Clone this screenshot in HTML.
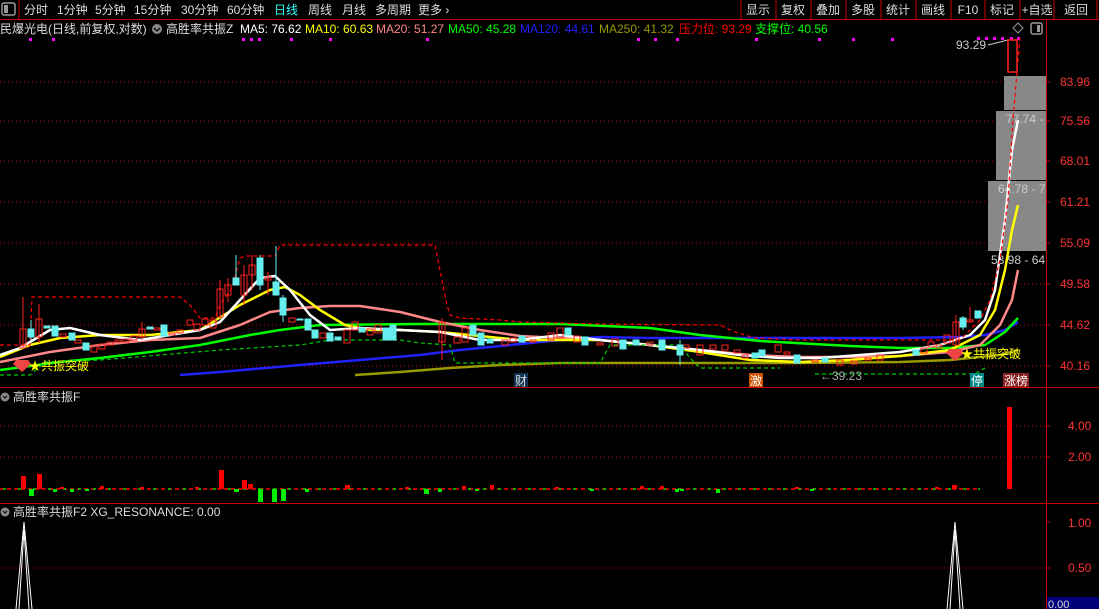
<!DOCTYPE html>
<html><head><meta charset="utf-8">
<style>
html,body{margin:0;padding:0;background:#000;width:1099px;height:609px;overflow:hidden;font-family:"Liberation Sans","Noto Sans CJK SC",sans-serif;}
svg{display:block}
text{font-family:"Liberation Sans","Noto Sans CJK SC",sans-serif;}
</style></head><body>
<svg width="1099" height="609" viewBox="0 0 1099 609" xmlns="http://www.w3.org/2000/svg">
<rect width="1099" height="609" fill="#000"/>
<rect x="2" y="3" width="13" height="12" fill="none" stroke="#999" stroke-width="1.5" rx="2"/>
<rect x="4" y="5" width="4" height="8" fill="#999"/>
<line x1="19" y1="0" x2="19" y2="19" stroke="#c00"/>
<g font-size="12" fill="#ddd">
<text x="24" y="14">分时</text><text x="57" y="14">1分钟</text><text x="95" y="14">5分钟</text>
<text x="134" y="14">15分钟</text><text x="181" y="14">30分钟</text><text x="227" y="14">60分钟</text>
<text x="274" y="14" fill="#3ff">日线</text><text x="308" y="14">周线</text><text x="342" y="14">月线</text>
<text x="375" y="14">多周期</text><text x="418" y="14">更多 ›</text>
</g>
<g stroke="#c00" fill="none">
<line x1="741" y1="0" x2="741" y2="19"/><line x1="776" y1="0" x2="776" y2="19"/><line x1="811" y1="0" x2="811" y2="19"/>
<line x1="846" y1="0" x2="846" y2="19"/><line x1="881" y1="0" x2="881" y2="19"/><line x1="916" y1="0" x2="916" y2="19"/>
<line x1="951" y1="0" x2="951" y2="19"/><line x1="985" y1="0" x2="985" y2="19"/><line x1="1020" y1="0" x2="1020" y2="19"/>
<line x1="1054" y1="0" x2="1054" y2="19"/><line x1="1097" y1="0" x2="1097" y2="19"/>
</g>
<g font-size="12" fill="#ddd" text-anchor="middle">
<text x="758" y="14">显示</text><text x="793" y="14">复权</text><text x="828" y="14">叠加</text><text x="863" y="14">多股</text>
<text x="898" y="14">统计</text><text x="933" y="14">画线</text><text x="968" y="14">F10</text><text x="1002" y="14">标记</text>
<text x="1037" y="14">+自选</text><text x="1076" y="14">返回</text>
</g>
<line x1="0" y1="19.5" x2="1099" y2="19.5" stroke="#c00"/>
<g font-size="12">
<text x="0" y="33" fill="#ddd">民爆光电(日线,前复权,对数)</text>
<circle cx="157" cy="29" r="5" fill="#888"/><path d="M154 28l3 3 3-3" stroke="#000" fill="none" stroke-width="1.3"/>
<text x="166" y="33" fill="#ddd">高胜率共振Z</text>
<text x="240" y="33" fill="#fff">MA5: 76.62</text>
<text x="305" y="33" fill="#ff0">MA10: 60.63</text>
<text x="376" y="33" fill="#f88">MA20: 51.27</text>
<text x="448" y="33" fill="#0f0">MA50: 45.28</text>
<text x="520" y="33" fill="#22f">MA120: 44.61</text>
<text x="599" y="33" fill="#990">MA250: 41.32</text>
<text x="679" y="33" fill="#f00">压力位: 93.29</text>
<text x="755" y="33" fill="#0f0">支撑位: 40.56</text>
</g>
<path d="M1018 23l5 5-5 5-5-5z" stroke="#999" fill="none"/>
<rect x="1031" y="23" width="11" height="11" fill="none" stroke="#999" stroke-width="1.5" rx="2"/><rect x="1037" y="25" width="3" height="7" fill="#999"/>
<g fill="#f0f">
<rect x="29" y="38" width="3" height="3"/><rect x="52" y="38" width="3" height="3"/><rect x="242" y="38" width="3" height="3"/><rect x="250" y="38" width="3" height="3"/><rect x="258" y="38" width="3" height="3"/><rect x="290" y="38" width="3" height="3"/><rect x="329" y="38" width="3" height="3"/><rect x="426" y="38" width="3" height="3"/><rect x="637" y="38" width="3" height="3"/><rect x="654" y="38" width="3" height="3"/><rect x="676" y="38" width="3" height="3"/><rect x="755" y="38" width="3" height="3"/><rect x="818" y="38" width="3" height="3"/><rect x="852" y="38" width="3" height="3"/><rect x="891" y="38" width="3" height="3"/><rect x="977" y="37" width="3" height="3"/><rect x="985" y="37" width="3" height="3"/><rect x="993" y="37" width="3" height="3"/><rect x="1001" y="37" width="3" height="3"/><rect x="1010" y="37" width="3" height="3"/><rect x="1017" y="37" width="3" height="3"/>
</g>
<line x1="1046.5" y1="20" x2="1046.5" y2="609" stroke="#c00"/>
<g stroke="#c00" stroke-dasharray="1 3">
<line x1="0" y1="82" x2="1046" y2="82"/><line x1="0" y1="121" x2="1046" y2="121"/><line x1="0" y1="161" x2="1046" y2="161"/>
<line x1="0" y1="202" x2="1046" y2="202"/><line x1="0" y1="243" x2="1046" y2="243"/><line x1="0" y1="284" x2="1046" y2="284"/>
<line x1="0" y1="325" x2="1046" y2="325"/><line x1="0" y1="366" x2="1046" y2="366"/>
<line x1="0" y1="426" x2="1046" y2="426"/><line x1="0" y1="457" x2="1046" y2="457"/>
<line x1="0" y1="568" x2="1046" y2="568"/>
</g>
<g font-size="12" fill="#f33">
<text x="1060" y="86">83.96</text><text x="1060" y="125">75.56</text><text x="1060" y="165">68.01</text>
<text x="1060" y="206">61.21</text><text x="1060" y="247">55.09</text><text x="1060" y="288">49.58</text>
<text x="1060" y="329">44.62</text><text x="1060" y="370">40.16</text>
<text x="1068" y="430">4.00</text><text x="1068" y="461">2.00</text>
<text x="1068" y="527">1.00</text><text x="1068" y="572">0.50</text>
</g>
<g stroke="#c00"><line x1="1046" y1="82" x2="1050" y2="82"/><line x1="1046" y1="121" x2="1050" y2="121"/><line x1="1046" y1="161" x2="1050" y2="161"/><line x1="1046" y1="202" x2="1050" y2="202"/><line x1="1046" y1="243" x2="1050" y2="243"/><line x1="1046" y1="284" x2="1050" y2="284"/><line x1="1046" y1="325" x2="1050" y2="325"/><line x1="1046" y1="366" x2="1050" y2="366"/><line x1="1046" y1="426" x2="1050" y2="426"/><line x1="1046" y1="457" x2="1050" y2="457"/><line x1="1046" y1="522" x2="1050" y2="522"/><line x1="1046" y1="568" x2="1050" y2="568"/></g>
<rect x="1004" y="76" width="42" height="34" fill="#888"/>
<rect x="996" y="111" width="50" height="69" fill="#888"/>
<rect x="988" y="181" width="58" height="70" fill="#888"/>
<g font-size="12" fill="#ccc"><text x="1006" y="123">77.74 -</text><text x="998" y="193">64.78 - 7</text><text x="991" y="264">53.98 - 64</text></g>
<text x="956" y="49" font-size="12" fill="#ccc">93.29</text>
<path d="M988 45l20-5" stroke="#ccc" fill="none"/>
<g fill="none" stroke-width="2.5" stroke-linejoin="round">
<polyline stroke="#990" points="355,375 400,372 450,368 500,365 560,363 620,363 700,363 800,363 900,362 950,360 1000,355 1018,350"/>
<polyline stroke="#22f" points="180,375 220,372 300,365 360,360 420,355 460,350 520,344 560,340 600,337 650,338 700,338 760,338 800,338 900,338 960,337 985,335 1005,330 1018,322"/>
<polyline stroke="#0f0" points="0,370 60,362 100,358 150,352 200,345 250,335 280,330 320,325 420,324 560,324 650,328 700,335 760,341 850,346 900,348 950,348 985,345 1005,332 1018,318"/>
<polyline stroke="#f88" points="0,362 50,352 100,345 150,340 200,338 240,325 270,312 300,308 330,306 360,306 400,312 440,322 480,330 520,336 560,338 600,340 650,345 700,350 750,355 800,357 850,357 900,356 950,352 980,345 1000,325 1012,300 1018,270"/>
<polyline stroke="#ff0" points="0,357 30,345 60,338 100,335 150,335 200,330 240,305 270,290 285,287 300,295 320,310 345,325 370,330 400,330 440,332 480,336 520,340 560,340 600,340 650,345 700,352 750,360 800,362 850,360 900,356 950,350 980,335 995,310 1005,270 1012,230 1018,205"/>
<polyline stroke="#fff" points="0,355 20,348 50,330 70,328 100,335 140,340 200,330 220,322 240,300 260,278 275,276 290,290 310,315 330,330 360,328 400,330 440,332 480,340 520,340 560,335 600,340 650,345 700,350 740,355 780,358 820,358 860,355 900,352 940,345 970,335 985,320 995,290 1005,220 1012,150 1018,120"/>
</g>
<g fill="none" stroke-width="1.2" stroke-dasharray="4 3">
<polyline stroke="#f00" points="0,345 30,345 32,297 180,297 190,305 200,318 215,318 220,305 232,288 240,258 245,256 275,256 280,245 435,245 440,270 447,305 450,315 460,318 500,320 520,322 600,324 720,325 735,332 755,338 800,340 900,340 960,340 980,320 990,300 1000,260 1008,200 1013,120 1018,60 1020,38"/>
<polyline stroke="#0c0" points="0,375 30,375 45,362 100,360 160,355 220,350 300,345 330,340 400,340 420,343 450,345 455,363 600,363 610,345 680,345 690,358 700,368 780,368"/>
<polyline stroke="#0c0" points="815,374 975,374 985,368"/>
</g>
<g>
<g stroke="#f22" fill="none" stroke-width="1">
<line x1="23" y1="297" x2="23" y2="348"/><rect x="20" y="329" width="6" height="19"/>
<line x1="39" y1="304" x2="39" y2="343"/><rect x="36" y="319" width="6" height="18"/>
<rect x="60" y="334" width="6" height="3"/><rect x="75" y="340" width="6" height="3"/><rect x="91" y="346" width="6" height="6"/>
<rect x="99" y="344" width="6" height="5"/><rect x="107" y="342" width="6" height="3"/><rect x="115" y="340" width="6" height="2"/>
<rect x="123" y="339" width="6" height="3"/><rect x="131" y="336" width="6" height="4"/><line x1="142" y1="322" x2="142" y2="340"/><rect x="139" y="329" width="6" height="8"/>
<rect x="154" y="328" width="6" height="2"/><rect x="169" y="333" width="6" height="2"/><rect x="177" y="330" width="6" height="3"/>
<rect x="187" y="320" width="6" height="5"/><rect x="194" y="324" width="6" height="6"/><rect x="202" y="319" width="6" height="6"/>
<rect x="210" y="320" width="6" height="8"/><line x1="220" y1="280" x2="220" y2="317"/><rect x="217" y="289" width="6" height="28"/>
<line x1="228" y1="278" x2="228" y2="302"/><rect x="225" y="285" width="6" height="10"/><line x1="244" y1="265" x2="244" y2="305"/><rect x="241" y="275" width="6" height="20"/>
<line x1="252" y1="255" x2="252" y2="290"/><rect x="249" y="265" width="6" height="10"/><line x1="268" y1="272" x2="268" y2="295"/><rect x="265" y="277" width="6" height="3"/>
<rect x="289" y="318" width="6" height="4"/><rect x="320" y="333" width="6" height="5"/><rect x="344" y="330" width="6" height="13"/>
<rect x="352" y="322" width="6" height="8"/><rect x="367" y="329" width="6" height="6"/><rect x="375" y="325" width="6" height="8"/>
<line x1="442" y1="318" x2="442" y2="360"/><rect x="439" y="322" width="6" height="20"/><rect x="454" y="337" width="6" height="6"/><rect x="462" y="328" width="6" height="14"/>
<rect x="502" y="340" width="6" height="5"/><rect x="510" y="338" width="6" height="4"/><rect x="530" y="340" width="6" height="2"/>
<rect x="548" y="333" width="6" height="7"/><rect x="557" y="328" width="6" height="10"/><rect x="574" y="336" width="6" height="6"/>
<rect x="597" y="343" width="6" height="2"/><rect x="612" y="339" width="6" height="7"/><rect x="647" y="342" width="6" height="3"/>
<rect x="683" y="345" width="6" height="3"/><rect x="697" y="345" width="6" height="10"/><rect x="710" y="345" width="6" height="4"/>
<rect x="722" y="345" width="6" height="5"/><rect x="734" y="350" width="6" height="3"/><rect x="742" y="355" width="6" height="3"/>
<rect x="775" y="345" width="6" height="7"/><rect x="784" y="352" width="6" height="2"/><rect x="812" y="360" width="6" height="2"/>
<rect x="837" y="360" width="6" height="5"/><rect x="851" y="361" width="6" height="3"/><rect x="865" y="358" width="6" height="2"/>
<rect x="877" y="355" width="6" height="5"/><rect x="921" y="348" width="6" height="5"/><rect x="928" y="342" width="6" height="5"/>
<rect x="936" y="345" width="6" height="3"/><rect x="944" y="335" width="6" height="8"/><line x1="956" y1="315" x2="956" y2="345"/><rect x="953" y="322" width="6" height="23"/>
<line x1="970" y1="307" x2="970" y2="322"/><rect x="967" y="320" width="6" height="2"/>
<rect x="1008" y="40" width="9" height="32" stroke-width="1.5"/>
</g>
<g fill="#6ee" stroke="#6ee">
<rect x="28" y="329" width="6" height="8"/><line x1="31" y1="320" x2="31" y2="340"/><rect x="44" y="326" width="6" height="2"/><rect x="52" y="326" width="6" height="10"/>
<rect x="69" y="333" width="6" height="7"/><rect x="83" y="343" width="6" height="7"/><rect x="147" y="327" width="6" height="2"/>
<rect x="161" y="325" width="6" height="11"/><line x1="236" y1="255" x2="236" y2="285"/><rect x="233" y="278" width="6" height="7"/>
<line x1="260" y1="255" x2="260" y2="290"/><rect x="257" y="258" width="6" height="27"/><line x1="276" y1="246" x2="276" y2="295"/><rect x="273" y="282" width="6" height="13"/>
<line x1="283" y1="295" x2="283" y2="322"/><rect x="280" y="298" width="6" height="17"/><rect x="297" y="319" width="6" height="1"/>
<rect x="305" y="319" width="6" height="11"/><rect x="312" y="330" width="6" height="8"/><rect x="327" y="333" width="6" height="8"/>
<rect x="335" y="337" width="6" height="3"/><rect x="359" y="328" width="6" height="4"/><rect x="383" y="328" width="6" height="12"/>
<rect x="390" y="325" width="6" height="15"/><rect x="470" y="325" width="6" height="10"/><rect x="478" y="333" width="6" height="12"/>
<rect x="487" y="339" width="6" height="4"/><rect x="519" y="336" width="6" height="6"/><rect x="565" y="328" width="6" height="7"/>
<rect x="582" y="337" width="6" height="8"/><rect x="620" y="340" width="6" height="9"/><rect x="633" y="340" width="6" height="5"/>
<rect x="659" y="340" width="6" height="10"/><line x1="680" y1="340" x2="680" y2="365"/><rect x="677" y="345" width="6" height="10"/>
<rect x="752" y="353" width="6" height="5"/><rect x="759" y="350" width="6" height="6"/><rect x="794" y="355" width="6" height="8"/>
<rect x="822" y="358" width="6" height="4"/><rect x="913" y="350" width="6" height="5"/><line x1="963" y1="316" x2="963" y2="330"/><rect x="960" y="318" width="6" height="9"/>
<rect x="975" y="311" width="6" height="7"/>
</g>
</g>
<g font-size="12">
<path d="M16 360h12l3 4-9 8-9-8z" fill="#e44"/><text x="29" y="370" fill="#ff0">★共振突破</text>
<path d="M949 349h12l3 4-9 8-9-8z" fill="#e44"/><text x="961" y="358" fill="#ff0">★共振突破</text>
<rect x="514" y="373" width="14" height="14" fill="#135"/><text x="515" y="385" fill="#ddd">财</text>
<rect x="749" y="373" width="14" height="14" fill="#c50"/><text x="750" y="385" fill="#fff">激</text>
<rect x="970" y="373" width="14" height="14" fill="#088"/><text x="971" y="385" fill="#fff">停</text>
<rect x="1003" y="373" width="26" height="14" fill="#822"/><text x="1004" y="385" fill="#fff">涨榜</text>
<text x="820" y="380" fill="#aaa">←39.23</text>
</g>
<line x1="0" y1="387.5" x2="1099" y2="387.5" stroke="#c00"/>
<line x1="0" y1="503.5" x2="1099" y2="503.5" stroke="#c00"/>
<circle cx="5" cy="397" r="4.5" fill="#888"/><path d="M3 396l2 2 2-2" stroke="#000" fill="none"/>
<text x="13" y="401" font-size="12" fill="#ddd">高胜率共振F</text>
<line x1="0" y1="489" x2="980" y2="489" stroke="#f00" stroke-dasharray="4 3" stroke-width="1.5"/>
<line x1="3" y1="489" x2="980" y2="489" stroke="#0d0" stroke-dasharray="3 12" stroke-width="1.5"/>
<g fill="#f00"><rect x="21" y="476" width="5" height="13"/><rect x="37" y="474" width="5" height="15"/><rect x="219" y="470" width="5" height="19"/><rect x="242" y="480" width="5" height="9"/><rect x="248" y="484" width="5" height="5"/><rect x="345" y="485" width="5" height="4"/><rect x="952" y="485" width="5" height="4"/><rect x="1007" y="407" width="5" height="82"/>
<rect x="60" y="487" width="4" height="2"/><rect x="100" y="486" width="4" height="3"/><rect x="140" y="487" width="4" height="2"/><rect x="195" y="487" width="4" height="2"/><rect x="345" y="486" width="4" height="3"/><rect x="405" y="487" width="4" height="2"/><rect x="462" y="486" width="4" height="3"/><rect x="490" y="485" width="4" height="4"/><rect x="555" y="487" width="4" height="2"/><rect x="640" y="486" width="4" height="3"/><rect x="660" y="486" width="4" height="3"/><rect x="795" y="487" width="4" height="2"/><rect x="935" y="487" width="4" height="2"/></g>
<g fill="#0e0"><rect x="29" y="489" width="5" height="7"/><rect x="234" y="489" width="5" height="3"/><rect x="258" y="489" width="5" height="13"/><rect x="272" y="489" width="5" height="13"/><rect x="281" y="489" width="5" height="12"/><rect x="424" y="489" width="5" height="5"/>
<rect x="53" y="489" width="4" height="3"/><rect x="70" y="489" width="4" height="3"/><rect x="85" y="489" width="4" height="2"/><rect x="234" y="489" width="4" height="3"/><rect x="305" y="489" width="4" height="3"/><rect x="438" y="489" width="4" height="3"/><rect x="475" y="489" width="4" height="2"/><rect x="590" y="489" width="4" height="2"/><rect x="680" y="489" width="4" height="2"/><rect x="810" y="489" width="4" height="2"/><rect x="675" y="489" width="4" height="3"/><rect x="716" y="489" width="4" height="4"/></g>
<circle cx="5" cy="512" r="4.5" fill="#888"/><path d="M3 511l2 2 2-2" stroke="#000" fill="none"/>
<text x="13" y="516" font-size="12" fill="#ddd">高胜率共振F2 XG_RESONANCE: 0.00</text>
<g stroke="#fff" fill="none" stroke-width="1"><polyline points="16,609 24,522 32,609"/><polyline points="947,609 955,522 963,609"/><polyline points="19,609 24,530 29,609"/><polyline points="950,609 955,530 960,609"/></g>
<rect x="1047" y="597" width="52" height="12" fill="#00007a"/>
<text x="1048" y="608" font-size="11" fill="#ddd">0.00</text>
</svg>
</body></html>
